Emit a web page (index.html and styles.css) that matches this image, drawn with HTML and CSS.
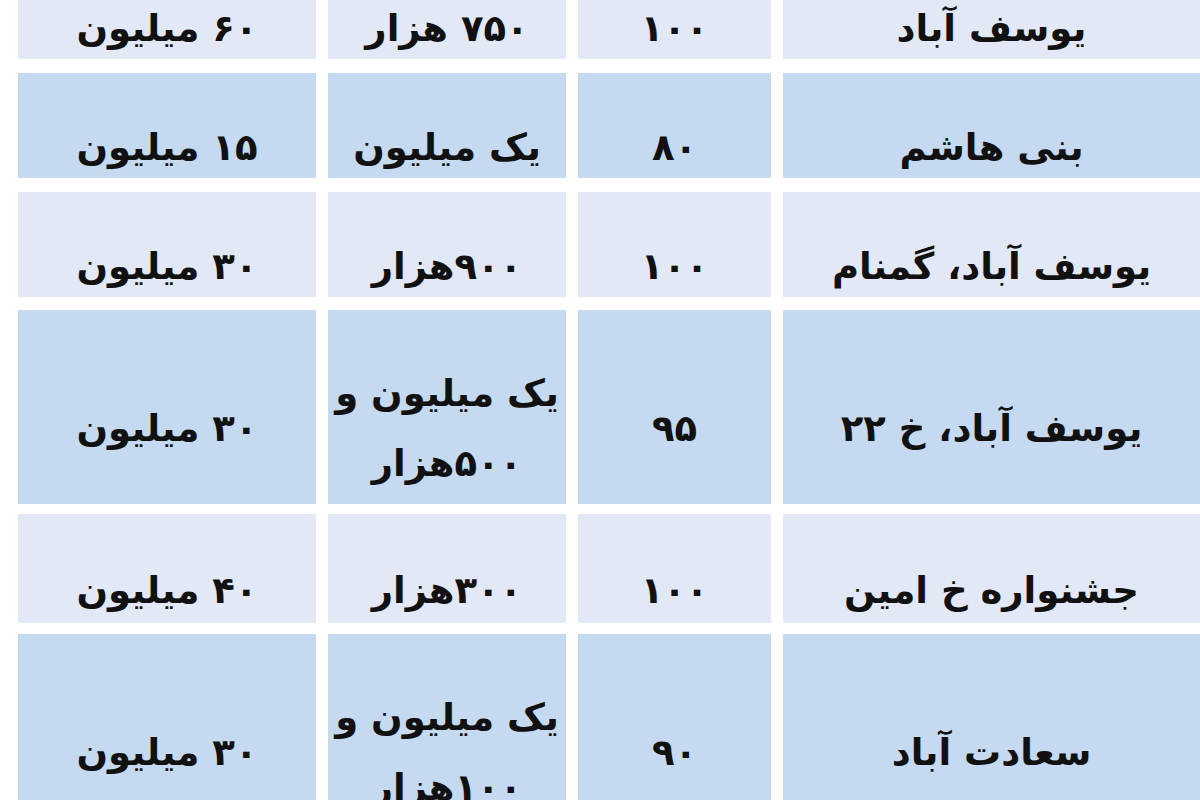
FILE: index.html
```html
<!DOCTYPE html>
<html lang="fa">
<head>
<meta charset="utf-8">
<title>جدول اجاره</title>
<link rel="stylesheet" href="styles.css">
</head>
<body>
<div class="table" dir="rtl">
  <div class="row light r1">
    <div class="cell">یوسف آباد</div>
    <div class="cell num">۱۰۰</div>
    <div class="cell">۷۵۰ هزار</div>
    <div class="cell">۶۰ میلیون</div>
  </div>
  <div class="row dark r2">
    <div class="cell">بنی هاشم</div>
    <div class="cell num">۸۰</div>
    <div class="cell">یک میلیون</div>
    <div class="cell">۱۵ میلیون</div>
  </div>
  <div class="row light r3">
    <div class="cell">یوسف آباد، گمنام</div>
    <div class="cell num">۱۰۰</div>
    <div class="cell">۹۰۰هزار</div>
    <div class="cell">۳۰ میلیون</div>
  </div>
  <div class="row dark r4 tall">
    <div class="cell">یوسف آباد، خ ۲۲</div>
    <div class="cell num">۹۵</div>
    <div class="cell"><span class="two">یک میلیون و<br>۵۰۰هزار</span></div>
    <div class="cell">۳۰ میلیون</div>
  </div>
  <div class="row light r5">
    <div class="cell">جشنواره خ امین</div>
    <div class="cell num">۱۰۰</div>
    <div class="cell">۳۰۰هزار</div>
    <div class="cell">۴۰ میلیون</div>
  </div>
  <div class="row dark r6 tall">
    <div class="cell">سعادت آباد</div>
    <div class="cell num">۹۰</div>
    <div class="cell"><span class="two">یک میلیون و<br>۱۰۰هزار</span></div>
    <div class="cell">۳۰ میلیون</div>
  </div>
</div>
</body>
</html>
```

FILE: styles.css
```css
html, body {
  margin: 0;
  padding: 0;
  background: #ffffff;
  overflow: hidden;
  width: 1200px;
  height: 800px;
}

.table {
  display: flex;
  flex-direction: column;
  padding-left: 18px;
  margin-top: -46px;
  font-family: "DejaVu Sans", sans-serif;
  font-weight: bold;
  font-size: 37px;
  color: #111111;
}

.row {
  display: grid;
  grid-template-columns: 1fr 193px 238px 298px;
  grid-template-rows: 105px;
  column-gap: 12px;
  flex: none;
}

.row.tall { grid-template-rows: 194px; }
.row.r5 { grid-template-rows: 109px; }

.r2, .r3 { margin-top: 14px; }
.r4 { margin-top: 13px; }
.r5 { margin-top: 10px; }
.r6 { margin-top: 11px; }

.light .cell { background: #e2e8f6; }
.dark .cell { background: #c5daf1; }

.cell {
  display: flex;
  align-items: center;
  justify-content: center;
  text-align: center;
  line-height: 40px;
  padding-top: 44px;
  box-sizing: border-box;
  white-space: nowrap;
  overflow: visible;
  min-height: 0;
}

.two {
  display: block;
  line-height: 70px;
}

.num { letter-spacing: 8px; }
```
